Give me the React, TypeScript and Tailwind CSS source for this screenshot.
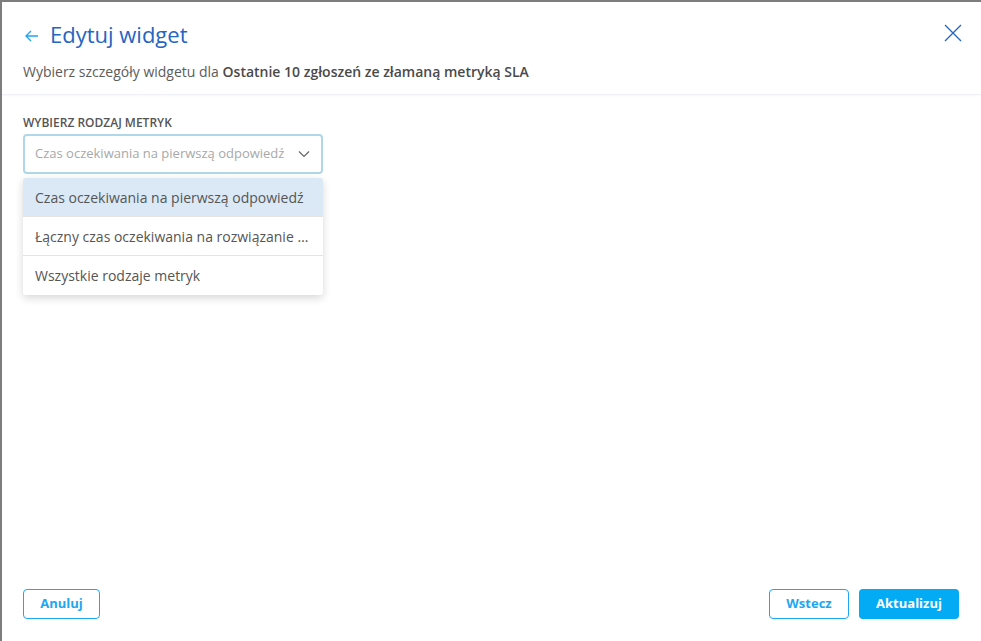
import React, { useState } from "react";

const options = [
  "Czas oczekiwania na pierwszą odpowiedź",
  "Łączny czas oczekiwania na rozwiązanie zgłoszenia",
  "Wszystkie rodzaje metryk",
];

const App: React.FC = () => {
  const [selected, setSelected] = useState<number>(0);
  const [open, setOpen] = useState<boolean>(true);

  return (
    <div
      className="w-[981px] h-[641px] bg-white border-l-2 border-t-2 border-[#7d7d7d] flex flex-col overflow-hidden"
      style={{ fontFamily: "'Open Sans', 'Noto Sans', sans-serif" }}
    >
      {/* Header */}
      <div className="relative px-[21px] pt-[17px] pb-[12px] border-b border-[#eef2f6] shadow-[0_1px_2px_rgba(0,0,0,0.03)]">
        <div className="flex items-center gap-[9px]">
          <svg width="18" height="14" viewBox="0 0 18 14" className="mt-[3px]">
            <path d="M15 7H3M8 2L3 7l5 5" fill="none" stroke="#1ea7f0" strokeWidth="1.4" />
          </svg>
          <h1 className="text-[22px] leading-[30px] text-[#2565c2]">Edytuj widget</h1>
        </div>
        <p className="mt-[13px] text-[14px] leading-[20px] text-[#5c5c5c]">
          Wybierz szczegóły widgetu dla{" "}
          <span className="font-semibold text-[#4a4a4a]">Ostatnie 10 zgłoszeń ze złamaną metryką SLA</span>
        </p>
        <button className="absolute right-[19px] top-[22px] w-[18px] h-[18px]">
          <svg width="18" height="18" viewBox="0 0 18 18">
            <path d="M1 1l16 16M17 1L1 17" stroke="#2565c2" strokeWidth="1.3" />
          </svg>
        </button>
      </div>

      {/* Body */}
      <div className="flex-1 px-[21px] pt-[20px]">
        <div className="text-[12px] leading-[16px] font-semibold text-[#555] uppercase">Wybierz rodzaj metryk</div>
        <div className="relative w-[300px] mt-[3px]">
          <button
            onClick={() => setOpen(!open)}
            className="w-full h-[40px] rounded-[4px] border-2 border-[#b0d6ea] flex items-center justify-between pl-[10px] pr-[10px] text-left"
          >
            <span className="text-[13px] text-[#a8a8a8] truncate">{options[selected]}</span>
            <svg width="12" height="8" viewBox="0 0 12 8" className="mr-[1px] shrink-0">
              <path d="M1 1.5l5 5 5-5" fill="none" stroke="#666" strokeWidth="1.2" />
            </svg>
          </button>
          {open && (
            <ul className="absolute left-0 top-[44px] w-full bg-white rounded-[3px] shadow-[0_3px_8px_rgba(0,0,0,0.16)] overflow-hidden">
              {options.map((opt, i) => (
                <li
                  key={opt}
                  onClick={() => {
                    setSelected(i);
                    setOpen(false);
                  }}
                  className={`h-[39px] px-[12px] flex items-center text-[14px] text-[#555] cursor-pointer ${
                    i < options.length - 1 ? "border-b border-[#e4e4e4]" : ""
                  } ${i === selected ? "bg-[#dbe9f6]" : "hover:bg-gray-50"}`}
                >
                  <span className="truncate">{opt}</span>
                </li>
              ))}
            </ul>
          )}
        </div>
      </div>

      {/* Footer */}
      <div className="flex items-center justify-between px-[21px] pb-[22px]">
        <button className="h-[30px] w-[77px] rounded-[4px] border border-[#1ea7f0] text-[13px] font-bold text-[#1ea7f0]">
          Anuluj
        </button>
        <div className="flex gap-[10px] mr-[1px]">
          <button className="h-[30px] w-[80px] rounded-[4px] border border-[#1ea7f0] text-[13px] font-bold text-[#1ea7f0]">
            Wstecz
          </button>
          <button className="h-[30px] w-[100px] rounded-[4px] bg-[#03aaf4] text-[13px] font-bold text-white">
            Aktualizuj
          </button>
        </div>
      </div>
    </div>
  );
};

export default App;
